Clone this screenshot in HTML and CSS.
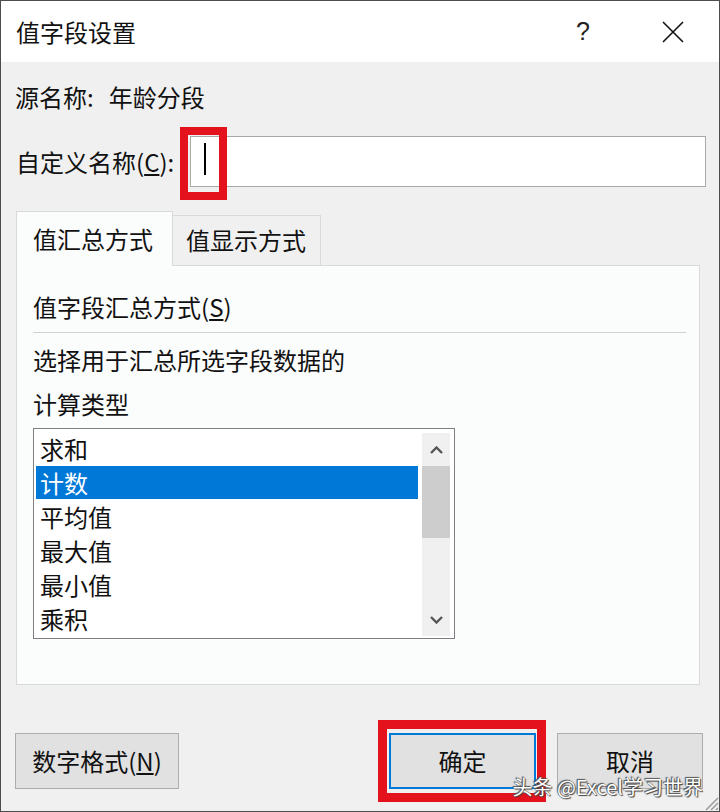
FILE: index.html
```html
<!DOCTYPE html>
<html lang="zh-CN">
<head>
<meta charset="utf-8">
<title>值字段设置</title>
<link rel="stylesheet" href="styles.css">
</head>
<body>
<div class="window">
  <div class="titlebar">
    <div class="title">值字段设置</div>
    <div class="caption-btn help">?</div>
    <div class="caption-btn close">
      <svg width="22" height="22" viewBox="0 0 22 22"><path d="M1 1 L21 21 M21 1 L1 21" stroke="#111" stroke-width="1.6" fill="none"/></svg>
    </div>
  </div>
  <div class="content">
    <div class="source-row">源名称:<span class="source-value">年龄分段</span></div>
    <div class="name-row">
      <label class="name-label">自定义名称(<u>C</u>):</label>
      <div class="input">
        <span class="caret"></span>
        <span class="mark mark-input"></span>
      </div>
    </div>
    <div class="tabs">
      <div class="tab active">值汇总方式</div>
      <div class="tab">值显示方式</div>
    </div>
    <div class="panel">
      <div class="panel-heading">值字段汇总方式(<u>S</u>)</div>
      <div class="separator"></div>
      <p class="desc">选择用于汇总所选字段数据的<br>计算类型</p>
      <div class="listbox">
        <ul class="items">
          <li>求和</li>
          <li class="selected">计数</li>
          <li>平均值</li>
          <li>最大值</li>
          <li>最小值</li>
          <li>乘积</li>
        </ul>
        <div class="scrollbar">
          <div class="sb-btn"><svg width="13" height="8" viewBox="0 0 13 8"><polyline points="1,7 6.5,1.5 12,7" fill="none" stroke="#555" stroke-width="2.4"/></svg></div>
          <div class="sb-thumb"></div>
          <div class="sb-track"></div>
          <div class="sb-btn"><svg width="13" height="8" viewBox="0 0 13 8"><polyline points="1,1 6.5,6.5 12,1" fill="none" stroke="#555" stroke-width="2.4"/></svg></div>
        </div>
      </div>
    </div>
    <div class="buttons">
      <div class="btn format">数字格式(<u>N</u>)</div>
      <div class="right-btns">
        <div class="btn default">确定<span class="mark mark-ok"></span></div>
        <div class="btn">取消</div>
      </div>
    </div>
  </div>
  <div class="watermark">头条 @Excel学习世界</div>
  <svg class="grip" width="16" height="16" viewBox="0 0 16 16"><path d="M15 3 L3 15 M15 8 L8 15 M15 13 L13 15" stroke="#9a9a9a" stroke-width="1.5"/></svg>
</div>
</body>
</html>
```

FILE: styles.css
```css
* { box-sizing: border-box; }
html, body { margin: 0; padding: 0; }
body {
  font-family: "Noto Sans CJK SC", "Noto Sans", sans-serif;
  font-size: 24px;
  color: #111;
  background: #f0f0f0;
}
.window {
  position: relative;
  width: 720px;
  height: 812px;
  border: 1px solid #4d4d4d;
  background: #f0f0f0;
  overflow: hidden;
}
.titlebar {
  height: 61px;
  background: #ffffff;
  display: flex;
  align-items: center;
  padding: 0 1px 0 15px;
}
.title { flex: 1; line-height: 30px; }
.caption-btn {
  width: 90px;
  height: 61px;
  display: flex;
  align-items: center;
  justify-content: center;
}
.help {
  font-family: "Liberation Sans", sans-serif;
  font-size: 25px;
  color: #222;
}
.content { padding: 0 13px 0 14px; }
.source-row { margin-top: 18px; line-height: 34px; }
.source-value { margin-left: 15px; }
.name-row {
  margin-top: 22px;
  display: flex;
  align-items: center;
  height: 51px;
}
.name-label { width: 175px; line-height: 51px; padding-left: 1px; }
.input {
  position: relative;
  flex: 1;
  height: 51px;
  background: #fff;
  border: 1px solid #a8a8a8;
  padding: 6px 0 0 13px;
}
.caret {
  display: block;
  width: 2px;
  height: 32px;
  background: #000;
}
.mark {
  position: absolute;
  border: 8px solid #e4121c;
  pointer-events: none;
}
.mark-input { left: -11px; top: -10px; width: 47px; height: 73px; }
.tabs {
  margin-top: 24px;
  margin-left: 1px;
  display: flex;
  align-items: flex-end;
  height: 54px;
}
.tab {
  height: 50px;
  line-height: 48px;
  padding: 0 14px 0 13px;
  background: #f0f0f0;
  border: 1px solid #d9d9d9;
  border-left: none;
  border-bottom: none;
}
.tab.active {
  position: relative;
  z-index: 1;
  height: 55px;
  margin-bottom: -1px;
  width: 157px;
  padding-left: 16px;
  line-height: 54px;
  background: #fbfcfc;
  border-left: 1px solid #d9d9d9;
}
.panel {
  margin-left: 1px;
  width: 684px;
  height: 420px;
  background: #fbfcfc;
  border: 1px solid #d9d9d9;
  padding: 24px 13px 0 16px;
}
.panel-heading { line-height: 34px; }
.separator { margin-top: 8px; height: 1px; background: #d0d0d0; }
.desc { margin: 5px 0 0; line-height: 44px; }
.listbox {
  margin-top: 2px;
  width: 422px;
  height: 211px;
  background: #fff;
  border: 1px solid #7e7e84;
  display: grid;
  grid-template-columns: 1fr 28px;
  column-gap: 4px;
  padding: 3px 4px 5px 2px;
  overflow: hidden;
}
.items { list-style: none; margin: 0; padding: 0; }
.items li { height: 34px; line-height: 34px; padding-left: 4px; }
.items li.selected { background: #0078d7; color: #fff; height: 33px; line-height: 33px; margin-bottom: 1px; }
.scrollbar {
  margin-top: 1px;
  background: #f0f0f0;
  display: flex;
  flex-direction: column;
}
.sb-btn { height: 33px; display: flex; align-items: center; justify-content: center; }
.sb-thumb { height: 72px; background: #cdcdcd; }
.sb-track { flex: 1; }
.buttons {
  margin-top: 48px;
  display: flex;
  justify-content: space-between;
  padding-right: 3px;
}
.right-btns { display: flex; gap: 21px; }
.btn {
  position: relative;
  height: 56px;
  width: 146px;
  line-height: 24px;
  background: #e1e1e1;
  border: 1px solid #adadad;
  display: flex;
  align-items: center;
  justify-content: center;
}
.btn.format { width: 164px; }
.btn.default { width: 147px; border: 2px solid #0078d7; }
.mark-ok { left: -13px; top: -15px; width: 168px; height: 82px; border-width: 9px; }
.watermark {
  position: absolute;
  right: 16px;
  top: 776px;
  font-size: 20px;
  line-height: 20px;
  color: #fff;
  text-shadow: 0 0 1px #333, 1px 1px 1px #444, -1px -1px 1px #555;
}
.grip { position: absolute; right: 0; bottom: 0; }
```
